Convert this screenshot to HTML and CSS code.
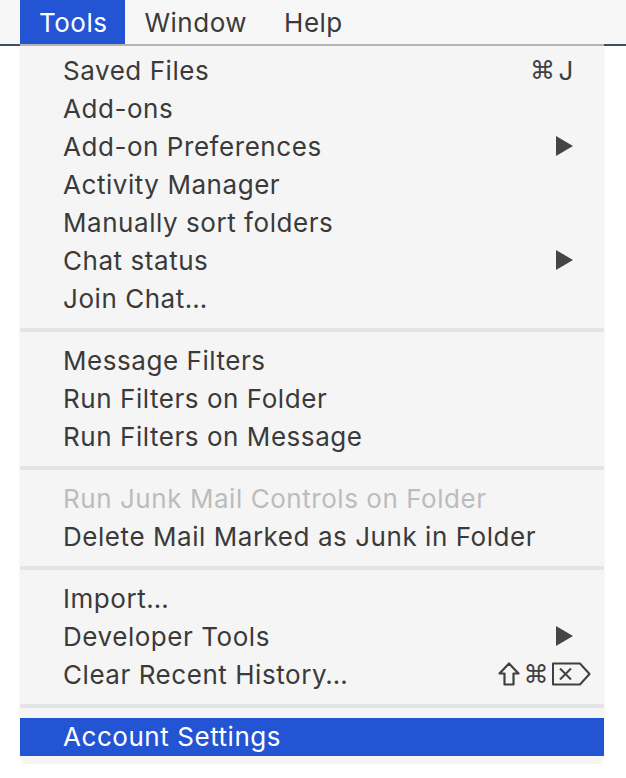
FILE: index.html
```html
<!DOCTYPE html>
<html lang="en">
<head>
  <meta charset="UTF-8" />
  <title>Tools menu</title>
  <link rel="stylesheet" href="styles.css">
</head>
<body>
  <div class="menubar">
    <div class="menubar-item open">Tools</div>
    <div class="menubar-item">Window</div>
    <div class="menubar-item">Help</div>
  </div>

  <div class="menu">
    <div class="group">
      <div class="item"><span>Saved Files</span><span class="key"><span class="cmd">⌘</span>J</span></div>
      <div class="item"><span>Add-ons</span></div>
      <div class="item"><span>Add-on Preferences</span><span class="arrow"></span></div>
      <div class="item"><span>Activity Manager</span></div>
      <div class="item"><span>Manually sort folders</span></div>
      <div class="item"><span>Chat status</span><span class="arrow"></span></div>
      <div class="item"><span>Join Chat…</span></div>
    </div>
    <div class="sep"></div>
    <div class="group">
      <div class="item"><span>Message Filters</span></div>
      <div class="item"><span>Run Filters on Folder</span></div>
      <div class="item"><span>Run Filters on Message</span></div>
    </div>
    <div class="sep"></div>
    <div class="group">
      <div class="item disabled"><span>Run Junk Mail Controls on Folder</span></div>
      <div class="item"><span>Delete Mail Marked as Junk in Folder</span></div>
    </div>
    <div class="sep"></div>
    <div class="group">
      <div class="item"><span>Import…</span></div>
      <div class="item"><span>Developer Tools</span><span class="arrow"></span></div>
      <div class="item">
        <span>Clear Recent History…</span>
        <span class="key wide">
          <svg class="shift" width="22" height="24" viewBox="0 0 22 24">
            <path d="M11 1.5 L20.5 11.5 H15.5 V22.5 H6.5 V11.5 H1.5 Z" fill="none" stroke="#404040" stroke-width="2.2" stroke-linejoin="round"/>
          </svg>
          <span class="cmd">⌘</span>
          <svg class="del" width="39" height="24" viewBox="0 0 39 24">
            <path d="M1 1.5 H28 L37.5 12 L28 22.5 H1 Z" fill="none" stroke="#404040" stroke-width="2" stroke-linejoin="round"/>
            <path d="M8 6.5 L19 17.5 M19 6.5 L8 17.5" stroke="#404040" stroke-width="2"/>
          </svg>
        </span>
      </div>
    </div>
    <div class="sep"></div>
    <div class="group">
      <div class="item active"><span>Account Settings</span></div>
    </div>
  </div>
</body>
</html>
```

FILE: styles.css
```css
body {
  margin: 0;
  background: #fff;
  font-family: Inter, 'Liberation Sans', sans-serif;
  color: #3a3a3a;
}

.menubar {
  display: flex;
  height: 44px;
  padding-left: 20px;
  background: #f7f7f7;
  border-bottom: 2px solid #3d5068;
}

.menubar-item {
  padding: 0 18px 0 19px;
  font-size: 26px;
  letter-spacing: 0.5px;
  line-height: 46px;
  color: #3a3a3a;
}

.menubar-item.open {
  background: #2354d3;
  color: #fff;
}

.menu {
  width: 584px;
  margin: -2px 0 0 20px;
  padding: 6px 0 8px;
  background: #f5f5f5;
  border-top: 2px solid #b4b4b4;
  border-radius: 0 0 10px 10px;
  box-shadow: 0 2px 3px rgba(0, 0, 0, 0.06);
}

.item {
  display: flex;
  justify-content: space-between;
  align-items: center;
  height: 36px;
  padding: 0 30px 2px 43px;
  font-size: 26px;
  letter-spacing: 0.55px;
}

.item.disabled {
  color: #bcbcbc;
}

.item.active {
  background: #2354d3;
  color: #fff;
}

.key {
  display: flex;
  align-items: center;
  gap: 3px;
  font-size: 26px;
  color: #404040;
}

.cmd {
  font-family: 'DejaVu Sans', sans-serif;
  font-size: 25px;
}

.key.wide {
  margin-right: -17px;
}

.arrow {
  width: 0;
  height: 0;
  margin-right: 1px;
  border-top: 10px solid transparent;
  border-bottom: 10px solid transparent;
  border-left: 17px solid #454545;
}

.sep {
  height: 4px;
  margin: 10px 0;
  background: #e4e4e4;
}
```
